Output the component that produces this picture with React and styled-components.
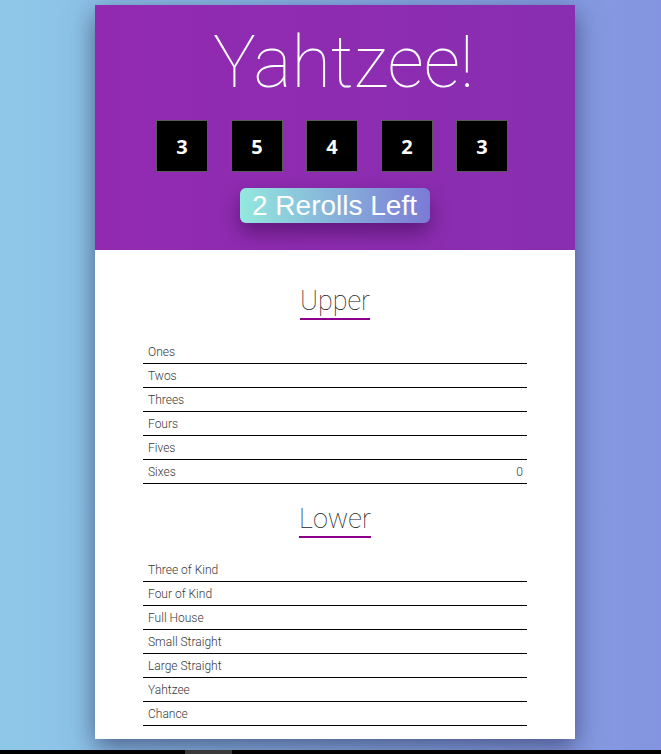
import React from "react";
import styled, { createGlobalStyle } from "styled-components";

const GlobalStyle = createGlobalStyle`
  html, body {
    margin: 0;
    padding: 0;
    height: 100%;
  }
  body {
    background: linear-gradient(to right, #8ec8e8, #8494e0);
    font-family: Roboto, "Liberation Sans", sans-serif;
    overflow: hidden;
  }
`;

const dice = [3, 5, 4, 2, 3];

const upper = ["Ones", "Twos", "Threes", "Fours", "Fives", "Sixes"];
const lower = [
  "Three of Kind",
  "Four of Kind",
  "Full House",
  "Small Straight",
  "Large Straight",
  "Yahtzee",
  "Chance",
];

export default function App() {
  return (
    <>
      <GlobalStyle />
      <Page>
        <Card>
          <Header>
            <Title>Yahtzee!</Title>
            <DiceRow>
              {dice.map((d, i) => (
                <Die key={i}>{d}</Die>
              ))}
            </DiceRow>
            <RerollButton>2 Rerolls Left</RerollButton>
          </Header>

          <Body>
            <Section>
              <SectionTitle>
                <span>Upper</span>
              </SectionTitle>
              <Table>
                {upper.map((name) => (
                  <Row key={name}>
                    <span>{name}</span>
                    <span>{name === "Sixes" ? "0" : ""}</span>
                  </Row>
                ))}
              </Table>
            </Section>

            <Section>
              <SectionTitle>
                <span>Lower</span>
              </SectionTitle>
              <Table>
                {lower.map((name) => (
                  <Row key={name}>
                    <span>{name}</span>
                    <span></span>
                  </Row>
                ))}
              </Table>
            </Section>
          </Body>
        </Card>
      </Page>
      <ScrollBar>
        <Thumb />
      </ScrollBar>
    </>
  );
}

const Page = styled.div`
  display: flex;
  justify-content: center;
  padding: 5px 0 0 9px;
`;

const Card = styled.div`
  width: 480px;
  background: white;
  box-shadow: 0 8px 24px rgba(20, 20, 60, 0.55);
`;

const Header = styled.div`
  display: flex;
  flex-direction: column;
  align-items: center;
  padding: 21px 0 27px;
  background: linear-gradient(to right, #922ab1, #892eb0);
`;

const Title = styled.h1`
  margin: 0;
  padding-left: 17px;
  font-family: Roboto, sans-serif;
  font-weight: 100;
  font-size: 72px;
  line-height: 74px;
  color: white;
`;

const DiceRow = styled.div`
  display: flex;
  gap: 23px;
  margin: 20px 6px 0 0;
`;

const Die = styled.div`
  width: 50px;
  height: 50px;
  display: flex;
  align-items: center;
  justify-content: center;
  background: black;
  border: 1px solid #5a5a5a;
  color: white;
  font-family: "Open Sans", sans-serif;
  font-weight: 700;
  font-size: 20px;
`;

const RerollButton = styled.button`
  margin-top: 16px;
  height: 35px;
  padding: 0 13px 0 12px;
  border: none;
  border-radius: 6px;
  background: linear-gradient(to right, #93e9de, #7b7ad6);
  color: white;
  font-family: "Liberation Sans", Arial, sans-serif;
  font-size: 28px;
  line-height: 35px;
  box-shadow: 0 10px 20px rgba(40, 0, 60, 0.45);
`;

const Body = styled.div`
  padding: 16px 0 13px;
`;

const Section = styled.div`
  display: flex;
  flex-direction: column;
  align-items: center;
`;

const SectionTitle = styled.h2`
  margin: 18px 0 20px;
  font-family: Roboto, sans-serif;
  font-weight: 100;
  font-size: 27px;
  line-height: 34px;
  color: #222;

  span {
    display: inline-block;
    border-bottom: 2px solid #8b008b;
  }
`;

const Table = styled.div`
  width: 384px;
`;

const Row = styled.div`
  display: flex;
  justify-content: space-between;
  align-items: center;
  height: 23px;
  padding: 0 4px 0 5px;
  border-bottom: 1px solid black;
  font-family: Roboto, sans-serif;
  font-weight: 300;
  font-size: 12px;
  color: #3a3a3a;
`;

const ScrollBar = styled.div`
  position: fixed;
  left: 0;
  right: 0;
  bottom: 0;
  height: 4px;
  background: black;
`;

const Thumb = styled.div`
  margin-left: 185px;
  width: 47px;
  height: 4px;
  background: #3a3a3a;
`;
